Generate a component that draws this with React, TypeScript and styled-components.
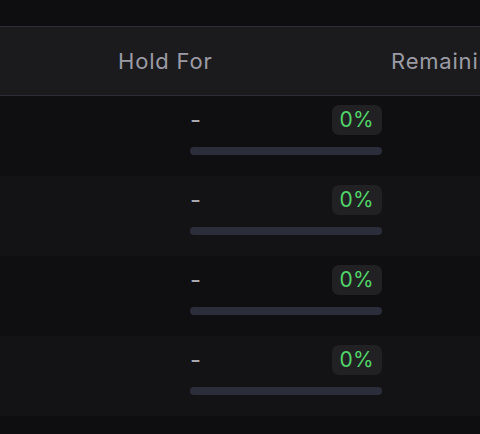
import styled, { createGlobalStyle } from "styled-components";

const GlobalStyle = createGlobalStyle`
    html, body {
        margin: 0;
        padding: 0;
        background: #0e0e10;
        font-family: Inter, "Noto Sans", sans-serif;
    }
`;

const Page = styled.div`
    width: 480px;
    height: 434px;
    overflow: hidden;
    background: #0e0e10;
    padding-top: 26px;
    box-sizing: border-box;
`;

const HeaderRow = styled.div`
    display: grid;
    grid-template-columns: 118px 273px 1fr;
    align-items: center;
    height: 68px;
    background: #1b1b1d;
    border-top: 1px solid #2d2d3a;
    border-bottom: 1px solid #2d2d3a;
    white-space: nowrap;
    overflow: hidden;
`;

const HeaderCell = styled.div`
    color: #9b9ba5;
    font-size: 22px;
    letter-spacing: 0.8px;
    line-height: 1;
`;

const Row = styled.div<{ $alt?: boolean }>`
    display: grid;
    grid-template-columns: 190px 192px 1fr;
    height: 80px;
    box-sizing: border-box;
    padding-top: 9px;
    background: ${(p) => (p.$alt ? "#131315" : "#0f0f11")};
`;

const HoldCell = styled.div`
    grid-column: 2;
    display: flex;
    flex-direction: column;
    gap: 12px;
`;

const TopLine = styled.div`
    display: flex;
    align-items: center;
    justify-content: space-between;
    height: 30px;
`;

const Dash = styled.span`
    color: #a8a8b0;
    font-size: 24px;
    line-height: 1;
`;

const Badge = styled.span`
    background: #212123;
    color: #52d46a;
    font-size: 21px;
    letter-spacing: 0.3px;
    line-height: 30px;
    height: 30px;
    padding: 0 8px;
    border-radius: 7px;
`;

const Track = styled.div`
    height: 8px;
    border-radius: 4px;
    background: #2c2d3a;
    overflow: hidden;
`;

const Fill = styled.div`
    height: 100%;
    background: #52d46a;
`;

const rows = [0, 0, 0, 0];

export default function App() {
    return (
        <>
            <GlobalStyle />
            <Page>
                <HeaderRow>
                    <span />
                    <HeaderCell>Hold For</HeaderCell>
                    <HeaderCell>Remaining</HeaderCell>
                </HeaderRow>
                {rows.map((pct, i) => (
                    <Row key={i} $alt={i % 2 === 1}>
                        <HoldCell>
                            <TopLine>
                                <Dash>-</Dash>
                                <Badge>{pct}%</Badge>
                            </TopLine>
                            <Track>
                                <Fill style={{ width: `${pct}%` }} />
                            </Track>
                        </HoldCell>
                    </Row>
                ))}
            </Page>
        </>
    );
}
